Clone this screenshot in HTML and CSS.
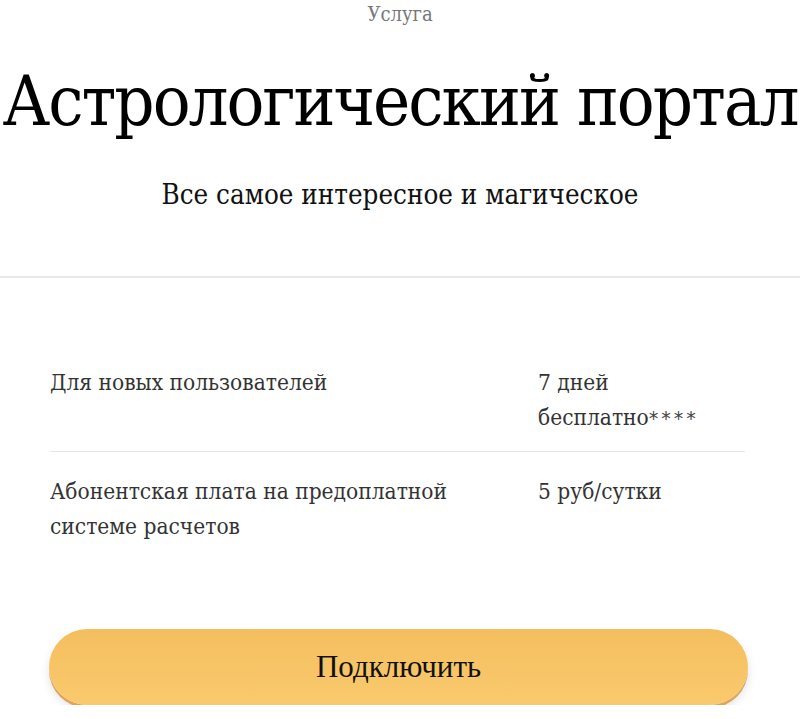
FILE: index.html
```html
<!DOCTYPE html>
<html lang="ru">
<head>
<meta charset="UTF-8">
<meta name="viewport" content="width=device-width, initial-scale=1.0">
<link rel="stylesheet" href="styles.css">
</head>
<body>

<div id="page">
  <div class="head">
    <div class="kind">Услуга</div>
    <h1>Астрологический портал</h1>
    <p class="lead">Все самое интересное и магическое</p>
  </div>

  <div class="terms">
    <div class="row">
      <div class="label">Для новых пользователей</div>
      <div class="value">7 дней<br>бесплатно<span class="note">****</span></div>
    </div>
    <div class="row">
      <div class="label">Абонентская плата на предоплатной системе расчетов</div>
      <div class="value">5 руб/сутки</div>
    </div>
  </div>

  <div class="action">
    <button id="connectButton">Подключить</button>
  </div>
</div>

</body>
</html>
```

FILE: styles.css
```css
body {
  margin: 0;
  overflow: hidden;
  background: #fff;
  font-family: "DejaVu Serif Condensed", "DejaVu Serif", serif;
  color: #222;
}

.head {
  text-align: center;
  border-bottom: 2px solid #e8e8e8;
  padding-bottom: 64px;
}

.kind {
  font-size: 20px;
  color: #777;
  line-height: 28px;
}

h1 {
  margin: 28px 0 0;
  font-size: 70px;
  font-weight: normal;
  letter-spacing: -2px;
  line-height: 90px;
  color: #000;
  white-space: nowrap;
}

.lead {
  margin: 30px 0 0;
  font-size: 27.5px;
  line-height: 36px;
  color: #111;
}

.terms {
  margin: 87px 55px 0 50px;
}

.row {
  display: grid;
  grid-template-columns: 488px 1fr;
  font-size: 22.5px;
  line-height: 35px;
  color: #333;
  padding-bottom: 15px;
}

.row + .row {
  border-top: 1px solid #e6e6e6;
  padding-top: 22px;
}

.label {
  padding-right: 40px;
}

.note {
  font-family: "DejaVu Sans", sans-serif;
  font-size: 19px;
  letter-spacing: 3px;
  color: #444;
}

.action {
  margin: 70px 52px 0 49px;
}

button {
  display: block;
  width: 100%;
  height: 76px;
  border: none;
  border-radius: 38px;
  background: linear-gradient(#f4be5f, #f9ca6d);
  box-shadow: 0 3px 0 #dea45a, 0 5px 10px rgba(0, 0, 0, .12);
  font-family: "Liberation Serif", serif;
  font-size: 31px;
  color: #111;
}
```
